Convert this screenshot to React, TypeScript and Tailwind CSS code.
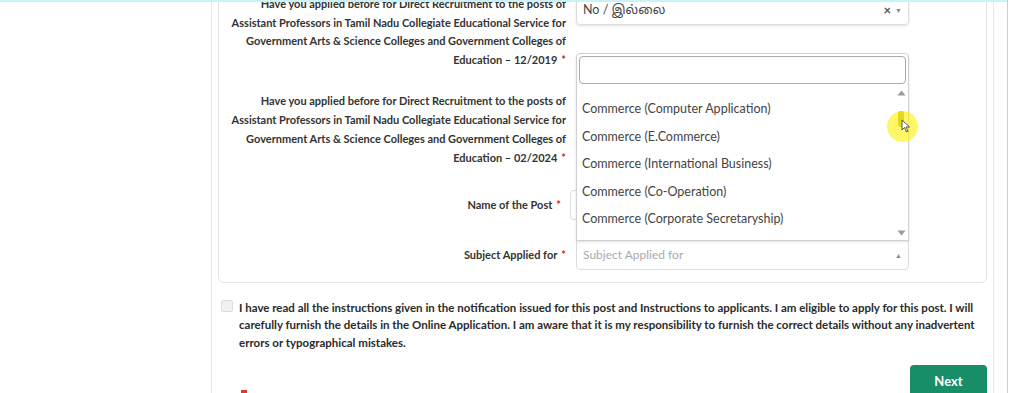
import React from "react";

const font = { fontFamily: "Lato, 'Noto Sans', 'Noto Sans Tamil', sans-serif" };

const Star = () => <span className="text-[#e02424] ml-1">*</span>;

const options = [
  "Commerce (Computer Application)",
  "Commerce (E.Commerce)",
  "Commerce (International Business)",
  "Commerce (Co-Operation)",
  "Commerce (Corporate Secretaryship)",
];

const Tri = ({ up }: { up?: boolean }) => (
  <svg width="9" height="6" viewBox="0 0 9 6">
    <path d={up ? "M0.5 5.5 L4.5 0.5 L8.5 5.5 Z" : "M0.5 0.5 L8.5 0.5 L4.5 5.5 Z"} fill="#9a9a9a" />
  </svg>
);

const App = () => {
  return (
    <div className="w-[1024px] h-[393px] overflow-hidden bg-white relative" style={font}>
      <div className="absolute top-0 left-0 w-[1007px] h-[2px] bg-[#c8f3f8]" />
      <div className="absolute top-0 left-[1007px] w-px h-full bg-[#b9d2f2]" />

      <div className="ml-[211px] w-[783px] h-full flex flex-col border-l border-r border-[#e6e6e6] pl-[6px]">
        {/* form card, scrolled so its top is off screen */}
        <div className="w-[769px] mt-[-40px] border border-[#e3e3e3] rounded-md pb-[12px] pt-[34px]">
          {/* row 1 */}
          <div className="flex items-start">
            <label className="w-[347px] text-right text-[11px] leading-[18.7px] font-bold text-[#333] whitespace-nowrap">
              Have you applied before for Direct Recruitment to the posts of<br />
              Assistant Professors in Tamil Nadu Collegiate Educational Service for<br />
              Government Arts &amp; Science Colleges and Government Colleges of<br />
              Education – 12/2019<Star />
            </label>
            <div className="ml-[10px] mt-[1px] w-[333px] h-[29px] border border-[#dcdcdc] rounded flex items-center pl-[6px] pr-[6px] text-[12.5px] text-[#444] shadow-sm">
              <span className="flex-1">No / இல்லை</span>
              <span className="text-[13px] font-bold text-[#555] mr-[4px]">×</span>
              <span className="text-[7px] text-[#888]">▼</span>
            </div>
          </div>

          {/* row 2 */}
          <div className="flex items-start mt-[21px]">
            <label className="w-[347px] text-right text-[11px] leading-[19px] font-bold text-[#333] whitespace-nowrap">
              Have you applied before for Direct Recruitment to the posts of<br />
              Assistant Professors in Tamil Nadu Collegiate Educational Service for<br />
              Government Arts &amp; Science Colleges and Government Colleges of<br />
              Education – 02/2024<Star />
            </label>
            <div className="ml-[10px] w-[333px] h-[29px] border border-[#dcdcdc] rounded" />
          </div>

          {/* row 3 */}
          <div className="flex items-center mt-[23px]">
            <label className="w-[342px] text-right text-[11px] font-bold text-[#333]">
              Name of the Post<Star />
            </label>
            <div className="ml-[9px] w-[339px] h-[30px] border border-[#dcdcdc] rounded" />
          </div>

          {/* row 4 */}
          <div className="flex items-center mt-[20px]">
            <label className="w-[347px] text-right text-[11px] font-bold text-[#333]">
              Subject Applied for<Star />
            </label>
            <div className="ml-[10px] w-[333px] h-[30px] border border-[#dcdcdc] rounded-b flex items-center px-[6px] text-[12px] text-[#aaa] relative">
              <span className="flex-1">Subject Applied for</span>
              <span className="text-[7px] text-[#888]">▲</span>

              {/* open dropdown (opens upward) */}
              <div className="absolute left-[-1px] bottom-full w-[333px] h-[188px] bg-white border border-[#d0d0d0] rounded-t shadow-sm flex flex-col">
                <div className="mx-[2px] mt-[2px] h-[28px] border border-[#aaa] rounded-sm" />
                <div className="flex flex-1 overflow-hidden">
                  <ul className="flex-1 pt-[12px] text-[12.5px] text-[#444]">
                    {options.map((o) => (
                      <li key={o} className="h-[27.5px] flex items-center px-[5px]">
                        {o}
                      </li>
                    ))}
                  </ul>
                  <div className="w-[12px] mr-[1px] relative flex flex-col items-center">
                    <span className="mt-[6px]"><Tri up /></span>
                    <div className="mt-[15px] w-[6px] h-[16px] rounded-full bg-[#b8b43a]" />
                    <span className="mt-auto mb-[4px]"><Tri /></span>
                  </div>
                </div>
              </div>
            </div>
          </div>
        </div>

        {/* declaration */}
        <div className="flex items-start mt-[16px] ml-[3px]">
          <div className="w-[12px] h-[12px] mt-[1px] border border-[#ddd] rounded-[2px] bg-[#f1f1f1] shrink-0" />
          <p className="ml-[6px] w-[745px] text-[11.5px] leading-[17.5px] font-bold text-[#2b2b2b]">
            I have read all the instructions given in the notification issued for this post and Instructions to applicants. I am eligible to apply for this post. I will carefully furnish the details in the Online Application. I am aware that it is my responsibility to furnish the correct details without any inadvertent errors or typographical mistakes.
          </p>
        </div>

        <div className="flex mt-[14px] relative">
          <span className="absolute left-[23px] top-[25px] w-[6px] h-[3px] bg-[#e53935]" />
          <button className="ml-[692px] w-[77px] h-[34px] bg-[#178d68] rounded-sm text-white text-[13px] font-bold pb-[2px]">
            Next
          </button>
        </div>
      </div>

      {/* cursor highlight */}
      <div className="absolute left-[887px] top-[111px] w-[31px] h-[31px] rounded-full bg-[#fff200]/60" />
      <svg className="absolute left-[901px] top-[119px]" width="10" height="14" viewBox="0 0 10 14">
        <path d="M1 1 L1 11 L3.5 8.5 L5.5 13 L7 12.3 L5 8 L8.5 8 Z" fill="#fff" stroke="#333" strokeWidth="0.8" />
      </svg>
    </div>
  );
};

export default App;
